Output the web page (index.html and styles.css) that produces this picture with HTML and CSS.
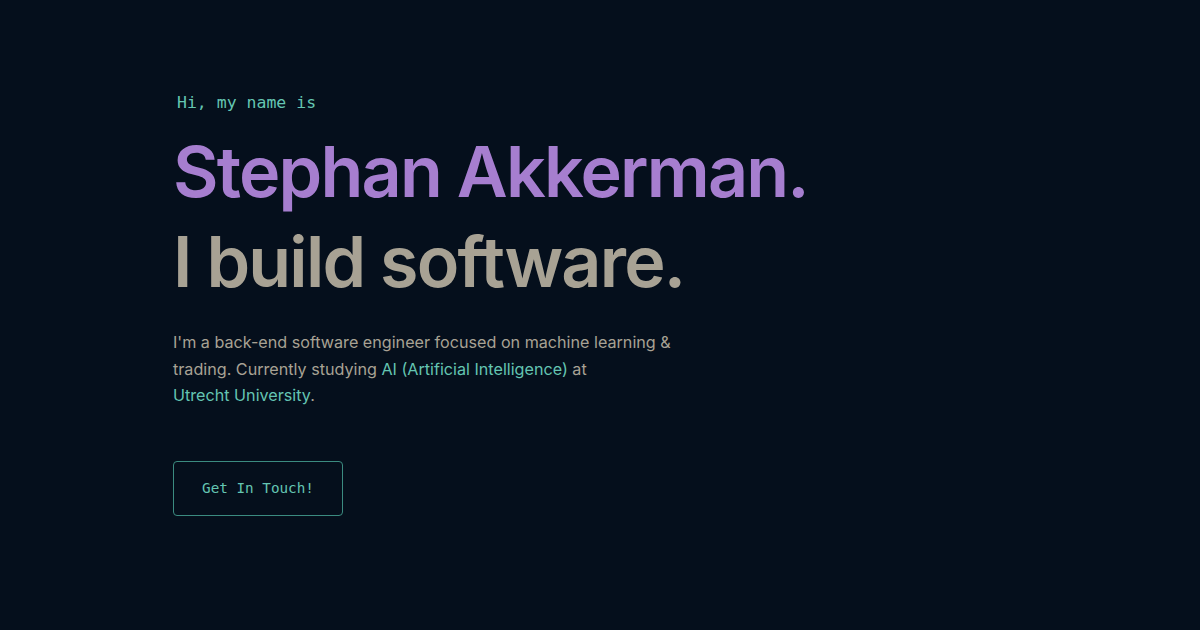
FILE: index.html
```html
<!DOCTYPE html>
<html lang="en">
<head>
<meta charset="utf-8">
<title>Stephan Akkerman</title>
<link rel="stylesheet" href="styles.css">
</head>
<body>
<main class="hero">
  <p class="intro">Hi, my name is</p>
  <h2 class="name">Stephan Akkerman.</h2>
  <h3 class="tagline">I build software.</h3>
  <p class="about">I'm a back-end software engineer focused on machine learning &amp; trading. Currently studying <a class="link" href="#">AI (Artificial Intelligence)</a> at <a class="link nowrap" href="#">Utrecht University</a>.</p>
  <a class="button" href="#">Get In Touch!</a>
</main>
</body>
</html>
```

FILE: styles.css
```css
html, body {
  margin: 0;
  padding: 0;
  background: #050f1c;
  width: 1200px;
  height: 630px;
  overflow: hidden;
}

.hero {
  display: flex;
  flex-direction: column;
  align-items: flex-start;
  padding: 94px 0 0 173px;
  font-family: Inter, "Noto Sans", sans-serif;
}

.intro {
  margin: 0 0 15px 4px;
  font-family: "DejaVu Sans Mono", "Liberation Mono", monospace;
  font-size: 16.5px;
  line-height: 1.1;
  color: #64c5b2;
}

.name,
.tagline {
  margin: 0;
  font-size: 70px;
  font-weight: 600;
  line-height: 90px;
  letter-spacing: -1.8px;
}

.name {
  color: #a67ecf;
}

.tagline {
  color: #a8a294;
}

.about {
  margin: 22px 0 0;
  max-width: 520px;
  font-size: 16.15px;
  line-height: 26.5px;
  color: #a8a294;
}

.link {
  color: #64c5b2;
  text-decoration: none;
}

.nowrap {
  white-space: nowrap;
}

.button {
  box-sizing: border-box;
  margin-top: 52px;
  width: 170px;
  height: 55px;
  display: flex;
  align-items: center;
  justify-content: center;
  border: 1px solid #3b8b80;
  border-radius: 4px;
  font-family: "DejaVu Sans Mono", "Liberation Mono", monospace;
  font-size: 14.3px;
  color: #64c5b2;
  text-decoration: none;
}
```
